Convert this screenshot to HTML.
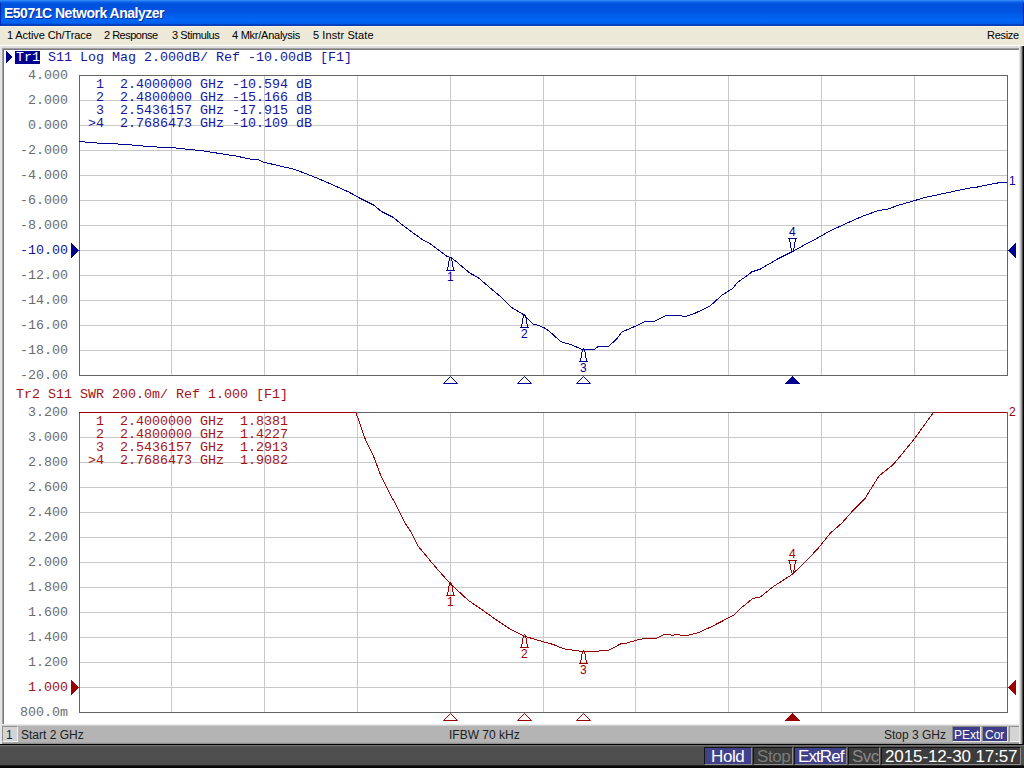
<!DOCTYPE html>
<html><head><meta charset="utf-8"><style>
html,body{margin:0;padding:0;width:1024px;height:768px;overflow:hidden;background:#fff}
.m{position:absolute;font-family:"Liberation Mono",monospace;font-size:13.333px;line-height:13px;white-space:pre}
.lab{left:0;width:68px;text-align:right}
.mn{position:absolute;font-family:"Liberation Sans",sans-serif;font-size:12px;line-height:12px;white-space:pre}
.s{position:absolute;font-family:"Liberation Sans",sans-serif;white-space:pre}
#title{position:absolute;left:0;top:0;width:1024px;height:26px;background:linear-gradient(to bottom,#3d8ef5 0px,#0a63ea 2px,#0051dc 4px,#0053e0 11px,#005fec 16px,#0066f5 20px,#0062f0 23px,#0050d8 24px,#0038b4 25px,#0038b4 26px)}
#menu{position:absolute;left:0;top:26px;width:1024px;height:19px;background:#ece9d8;border-top:1px solid #fbf6e4;box-sizing:border-box}
#frame{position:absolute;left:0;top:45px;width:1024px;height:679px;background:#fff}
#chbar{position:absolute;left:0;top:724px;width:1024px;height:20px;background:#b4b4b4}
.bx{position:absolute;top:3px;height:18px;box-sizing:border-box;border-top:1px solid #141414;border-left:1px solid #141414;border-bottom:1px solid #8c8c8c;border-right:1px solid #8c8c8c}
#insbar{position:absolute;left:0;top:744px;width:1024px;height:24px;background:#4e4e4e}
</style></head><body>
<div id="title"></div>
<div class="s" style="left:4px;top:4px;font-size:14px;font-weight:bold;color:#fff;line-height:18px;letter-spacing:-0.5px;text-shadow:1px 1px 0 #0a2a9a">E5071C Network Analyzer</div>
<div style="position:absolute;left:0;top:3px;width:1px;height:23px;background:#0029b8"></div>
<div style="position:absolute;left:1023px;top:3px;width:1px;height:23px;background:#001a90"></div>
<div id="menu"></div>
<div class="s" style="left:7px;top:28px;font-size:11px;line-height:14px;color:#000;letter-spacing:-0.1px">1 Active Ch/Trace</div>
<div class="s" style="left:104px;top:28px;font-size:11px;line-height:14px;color:#000;letter-spacing:-0.5px">2 Response</div>
<div class="s" style="left:172px;top:28px;font-size:11px;line-height:14px;color:#000;letter-spacing:-0.4px">3 Stimulus</div>
<div class="s" style="left:232px;top:28px;font-size:11px;line-height:14px;color:#000;letter-spacing:-0.25px">4 Mkr/Analysis</div>
<div class="s" style="left:313px;top:28px;font-size:11px;line-height:14px;color:#000;letter-spacing:0.1px">5 Instr State</div>
<div class="s" style="left:987px;top:28px;font-size:11px;line-height:14px;color:#000;letter-spacing:-0.3px">Resize</div>
<div id="frame">
 <div style="position:absolute;left:0;top:0;width:1024px;height:1px;background:#fff"></div>
 <div style="position:absolute;left:0;top:1px;width:1019px;height:2px;background:#dcdcdc"></div>
 <div style="position:absolute;left:2px;top:3px;width:1017px;height:1px;background:#a0a0a0"></div>
 <div style="position:absolute;left:3px;top:4px;width:1016px;height:1px;background:#7c7c7c"></div>
 <div style="position:absolute;left:0;top:1px;width:2px;height:678px;background:#e4e4e4"></div>
 <div style="position:absolute;left:2px;top:3px;width:1px;height:676px;background:#a0a0a0"></div>
 <div style="position:absolute;left:3px;top:4px;width:1px;height:675px;background:#7c7c7c"></div>
</div>
<svg width="1024" height="768" style="position:absolute;left:0;top:0"><g stroke="#c8c8c8" stroke-width="1" shape-rendering="crispEdges"><line x1="80" y1="100.5" x2="1007" y2="100.5"/><line x1="80" y1="125.5" x2="1007" y2="125.5"/><line x1="80" y1="150.5" x2="1007" y2="150.5"/><line x1="80" y1="175.5" x2="1007" y2="175.5"/><line x1="80" y1="200.5" x2="1007" y2="200.5"/><line x1="80" y1="225.5" x2="1007" y2="225.5"/><line x1="80" y1="250.5" x2="1007" y2="250.5"/><line x1="80" y1="275.5" x2="1007" y2="275.5"/><line x1="80" y1="300.5" x2="1007" y2="300.5"/><line x1="80" y1="325.5" x2="1007" y2="325.5"/><line x1="80" y1="350.5" x2="1007" y2="350.5"/><line x1="171.5" y1="76" x2="171.5" y2="375"/><line x1="264.5" y1="76" x2="264.5" y2="375"/><line x1="357.5" y1="76" x2="357.5" y2="375"/><line x1="450.5" y1="76" x2="450.5" y2="375"/><line x1="543.5" y1="76" x2="543.5" y2="375"/><line x1="635.5" y1="76" x2="635.5" y2="375"/><line x1="728.5" y1="76" x2="728.5" y2="375"/><line x1="821.5" y1="76" x2="821.5" y2="375"/><line x1="914.5" y1="76" x2="914.5" y2="375"/></g><rect x="79.5" y="75.5" width="928" height="300" fill="none" stroke="#646464" stroke-width="1" shape-rendering="crispEdges"/><polyline points="79.5,141.4 91.8,142.8 113.8,143.7 133.1,145.1 146.3,146.3 160.4,147.2 171.8,147.6 185,149 202.6,150.7 221.9,153.9 236,156 250,159.1 257,159.3 264.1,162.3 278.1,165.5 294,169.3 306.2,173.7 320.3,179.5 332.6,184.8 348.4,191.8 357.2,196.6 360,198.3 373.6,205 381.5,211.5 393,217.2 404.4,226.5 423,240.1 430.2,243.7 447.4,256.6 450.3,257.3 454.6,260.2 470.3,273.4 477.5,277.1 499.5,295.8 510.9,307.1 524.6,315.3 532.8,323.9 539.6,325.8 545.1,328.3 552,333.5 560.2,341.3 562.9,342.6 568.4,343.6 583.4,349.9 594.3,349.5 598.4,346.3 605.3,346.3 608,347.1 617.6,337.9 621.7,332.1 625.8,330.3 640,324.2 644.9,321.6 655,321 665.2,316 679.2,315.7 685.5,316.5 694.4,313.5 709.7,306.3 722.4,294.9 732.5,288.6 737.6,282.2 745.2,277.1 751.6,272 760.5,269 778.2,258.6 792.2,251.7 803.6,245.4 812.9,240.6 827.9,232 843,224.9 862.3,216.3 878.4,210.5 888.1,209 896.7,205.8 913.9,200.8 924.6,197.6 939.6,194.4 967.6,188.4 978.3,186.9 995.5,183.2 1007.3,182.1" fill="none" stroke="#000090" stroke-width="1" stroke-linejoin="round" shape-rendering="crispEdges"/><path d="M450.5,257.5 L449.5,258.5 L447.5,269.5 L446.5,270.5 L454.5,270.5 L453.5,269.5 L451.5,258.5 Z" fill="none" stroke="#000090" stroke-width="1" shape-rendering="crispEdges"/><path d="M524.5,314.5 L523.5,315.5 L521.5,326.5 L520.5,327.5 L528.5,327.5 L527.5,326.5 L525.5,315.5 Z" fill="none" stroke="#000090" stroke-width="1" shape-rendering="crispEdges"/><path d="M583.5,348.5 L582.5,349.5 L580.5,360.5 L579.5,361.5 L587.5,361.5 L586.5,360.5 L584.5,349.5 Z" fill="none" stroke="#000090" stroke-width="1" shape-rendering="crispEdges"/><path d="M792.5,251.5 L791.5,250.5 L789.5,239.5 L788.5,238.5 L796.5,238.5 L795.5,239.5 L793.5,250.5 Z" fill="none" stroke="#000090" stroke-width="1" shape-rendering="crispEdges"/><path d="M450.5,376.5 L443.5,383.5 L457.5,383.5 Z" fill="none" stroke="#000090" stroke-width="1"/><path d="M524.5,376.5 L517.5,383.5 L531.5,383.5 Z" fill="none" stroke="#000090" stroke-width="1"/><path d="M583.5,376.5 L576.5,383.5 L590.5,383.5 Z" fill="none" stroke="#000090" stroke-width="1"/><path d="M792.5,376 L784.5,384 L800.5,384 Z" fill="#000090" shape-rendering="crispEdges"/><path d="M71,242.5 L79,250.5 L71,258.5 Z" fill="#000090" shape-rendering="crispEdges"/><path d="M1016,242.5 L1008,250.5 L1016,258.5 Z" fill="#000090" shape-rendering="crispEdges"/><g stroke="#c8c8c8" stroke-width="1" shape-rendering="crispEdges"><line x1="80" y1="437.5" x2="1007" y2="437.5"/><line x1="80" y1="462.5" x2="1007" y2="462.5"/><line x1="80" y1="487.5" x2="1007" y2="487.5"/><line x1="80" y1="512.5" x2="1007" y2="512.5"/><line x1="80" y1="537.5" x2="1007" y2="537.5"/><line x1="80" y1="562.5" x2="1007" y2="562.5"/><line x1="80" y1="587.5" x2="1007" y2="587.5"/><line x1="80" y1="612.5" x2="1007" y2="612.5"/><line x1="80" y1="637.5" x2="1007" y2="637.5"/><line x1="80" y1="662.5" x2="1007" y2="662.5"/><line x1="80" y1="687.5" x2="1007" y2="687.5"/><line x1="171.5" y1="413" x2="171.5" y2="712"/><line x1="264.5" y1="413" x2="264.5" y2="712"/><line x1="357.5" y1="413" x2="357.5" y2="712"/><line x1="450.5" y1="413" x2="450.5" y2="712"/><line x1="543.5" y1="413" x2="543.5" y2="712"/><line x1="635.5" y1="413" x2="635.5" y2="712"/><line x1="728.5" y1="413" x2="728.5" y2="712"/><line x1="821.5" y1="413" x2="821.5" y2="712"/><line x1="914.5" y1="413" x2="914.5" y2="712"/></g><rect x="79.5" y="412.5" width="928" height="300" fill="none" stroke="#646464" stroke-width="1" shape-rendering="crispEdges"/><polyline points="79,412.5 355.9,412.5 359.1,421.4 364.6,437.8 372.8,454.2 381,476.1 389.2,492.5 397.4,507.6 405.6,524 411.1,532.2 418,545.9 430.3,560.9 438.5,570.5 450.8,584.2 468.6,600.6 480,608.3 495.2,619.2 510.5,629.4 524.4,636.2 538.4,640.3 553.6,644.6 563.8,648.9 582.8,651.5 595.6,651.3 608.9,650.2 620.6,643.9 626.9,643.1 639.4,639.2 656.6,638.1 662.8,635 669.1,634.5 672.2,635.3 677.7,634.5 681.6,635.3 687.8,635.3 698.8,632.5 711.3,626.7 720.6,622 733.9,615 741.5,607.7 752.9,598.3 760.1,597.1 773,586.8 791.6,574.8 804.5,562.8 818.8,547.6 830.3,533.2 841.7,523.2 853.2,510.3 864.7,498.9 879,475.9 893.3,464.5 913.4,440.1 924.8,424.4 933.4,412.5 1007,412.5" fill="none" stroke="#9a0000" stroke-width="1" stroke-linejoin="round" shape-rendering="crispEdges"/><path d="M450.5,582.5 L449.5,583.5 L447.5,594.5 L446.5,595.5 L454.5,595.5 L453.5,594.5 L451.5,583.5 Z" fill="none" stroke="#9a0000" stroke-width="1" shape-rendering="crispEdges"/><path d="M524.5,634.5 L523.5,635.5 L521.5,646.5 L520.5,647.5 L528.5,647.5 L527.5,646.5 L525.5,635.5 Z" fill="none" stroke="#9a0000" stroke-width="1" shape-rendering="crispEdges"/><path d="M583.5,650.5 L582.5,651.5 L580.5,662.5 L579.5,663.5 L587.5,663.5 L586.5,662.5 L584.5,651.5 Z" fill="none" stroke="#9a0000" stroke-width="1" shape-rendering="crispEdges"/><path d="M792.5,573.5 L791.5,572.5 L789.5,561.5 L788.5,560.5 L796.5,560.5 L795.5,561.5 L793.5,572.5 Z" fill="none" stroke="#9a0000" stroke-width="1" shape-rendering="crispEdges"/><path d="M450.5,713.5 L443.5,720.5 L457.5,720.5 Z" fill="none" stroke="#9a0000" stroke-width="1"/><path d="M524.5,713.5 L517.5,720.5 L531.5,720.5 Z" fill="none" stroke="#9a0000" stroke-width="1"/><path d="M583.5,713.5 L576.5,720.5 L590.5,720.5 Z" fill="none" stroke="#9a0000" stroke-width="1"/><path d="M792.5,713 L784.5,721 L800.5,721 Z" fill="#9a0000" shape-rendering="crispEdges"/><path d="M71,679.5 L79,687.5 L71,695.5 Z" fill="#9a0000" shape-rendering="crispEdges"/><path d="M1016,679.5 L1008,687.5 L1016,695.5 Z" fill="#9a0000" shape-rendering="crispEdges"/></svg><div style="position:absolute;left:15px;top:51px;width:25px;height:13px;background:#000090"></div><svg width="8" height="16" style="position:absolute;left:5px;top:50px"><path d="M1,0.5 L7,7 L1,13.5 Z" fill="#000090" shape-rendering="crispEdges"/></svg><div class="m" style="left:16px;top:51px;color:#1616a0;"><span style="color:#fff">Tr1</span> S11 Log Mag 2.000dB/ Ref -10.00dB [F1]</div><div class="m" style="left:16px;top:388px;color:#a41414;">Tr2 S11 SWR 200.0m/ Ref 1.000 [F1]</div><div class="m lab" style="top:69px;color:#6c6c6c">4.000</div><div class="m lab" style="top:94px;color:#6c6c6c">2.000</div><div class="m lab" style="top:119px;color:#6c6c6c">0.000</div><div class="m lab" style="top:144px;color:#6c6c6c">-2.000</div><div class="m lab" style="top:169px;color:#6c6c6c">-4.000</div><div class="m lab" style="top:194px;color:#6c6c6c">-6.000</div><div class="m lab" style="top:219px;color:#6c6c6c">-8.000</div><div class="m lab" style="top:244px;color:#1616a0">-10.00</div><div class="m lab" style="top:269px;color:#6c6c6c">-12.00</div><div class="m lab" style="top:294px;color:#6c6c6c">-14.00</div><div class="m lab" style="top:319px;color:#6c6c6c">-16.00</div><div class="m lab" style="top:344px;color:#6c6c6c">-18.00</div><div class="m lab" style="top:369px;color:#6c6c6c">-20.00</div><div class="m lab" style="top:406px;color:#6c6c6c">3.200</div><div class="m lab" style="top:431px;color:#6c6c6c">3.000</div><div class="m lab" style="top:456px;color:#6c6c6c">2.800</div><div class="m lab" style="top:481px;color:#6c6c6c">2.600</div><div class="m lab" style="top:506px;color:#6c6c6c">2.400</div><div class="m lab" style="top:531px;color:#6c6c6c">2.200</div><div class="m lab" style="top:556px;color:#6c6c6c">2.000</div><div class="m lab" style="top:581px;color:#6c6c6c">1.800</div><div class="m lab" style="top:606px;color:#6c6c6c">1.600</div><div class="m lab" style="top:631px;color:#6c6c6c">1.400</div><div class="m lab" style="top:656px;color:#6c6c6c">1.200</div><div class="m lab" style="top:681px;color:#a41414">1.000</div><div class="m lab" style="top:706px;color:#6c6c6c">800.0m</div><div class="m" style="left:88px;top:78px;color:#1616a0;"> 1  2.4000000 GHz -10.594 dB</div><div class="m" style="left:88px;top:91px;color:#1616a0;"> 2  2.4800000 GHz -15.166 dB</div><div class="m" style="left:88px;top:104px;color:#1616a0;"> 3  2.5436157 GHz -17.915 dB</div><div class="m" style="left:88px;top:117px;color:#1616a0;">&gt;4  2.7686473 GHz -10.109 dB</div><div class="m" style="left:88px;top:415px;color:#a41414;"> 1  2.4000000 GHz  1.8381</div><div class="m" style="left:88px;top:428px;color:#a41414;"> 2  2.4800000 GHz  1.4227</div><div class="m" style="left:88px;top:441px;color:#a41414;"> 3  2.5436157 GHz  1.2913</div><div class="m" style="left:88px;top:454px;color:#a41414;">&gt;4  2.7686473 GHz  1.9082</div><div class="mn" style="left:447px;top:271px;color:#000090">1</div><div class="mn" style="left:521px;top:328px;color:#000090">2</div><div class="mn" style="left:580px;top:362px;color:#000090">3</div><div class="mn" style="left:789px;top:226px;color:#000090">4</div><div class="mn" style="left:447px;top:596px;color:#9a0000">1</div><div class="mn" style="left:521px;top:648px;color:#9a0000">2</div><div class="mn" style="left:580px;top:664px;color:#9a0000">3</div><div class="mn" style="left:789px;top:548px;color:#9a0000">4</div><div class="mn" style="left:1009px;top:175px;color:#000090">1</div><div class="mn" style="left:1009px;top:406px;color:#9a0000">2</div>
<div id="chbar">
 <div style="position:absolute;left:0;top:0;width:1024px;height:1px;background:#ececec"></div>
 <div style="position:absolute;left:0;top:1px;width:1024px;height:1px;background:#d0d0d0"></div>
 <div style="position:absolute;left:0;top:18px;width:1024px;height:1px;background:#a8a8a8"></div>
 <div style="position:absolute;left:0;top:19px;width:1024px;height:1px;background:#909090"></div>
 <div style="position:absolute;left:2px;top:2px;width:14px;height:14px;background:#d4d4d4;border-top:1px solid #909090;border-left:1px solid #909090;border-bottom:1px solid #f0f0f0;border-right:1px solid #f0f0f0"></div>
 <div style="position:absolute;left:1009px;top:2px;width:9px;height:14px;background:#d4d4d4;border-top:1px solid #909090;border-left:1px solid #909090;border-bottom:1px solid #f0f0f0;border-right:1px solid #f0f0f0"></div>
 <div style="position:absolute;left:952px;top:2px;width:29px;height:16px;background:#3e3e88;border-top:1px solid #8a8a8a;border-left:1px solid #8a8a8a;border-bottom:1px solid #e4e4e4;border-right:1px solid #e4e4e4;box-sizing:border-box"></div>
 <div style="position:absolute;left:982px;top:2px;width:26px;height:16px;background:#3e3e88;border-top:1px solid #8a8a8a;border-left:1px solid #8a8a8a;border-bottom:1px solid #e4e4e4;border-right:1px solid #e4e4e4;box-sizing:border-box"></div>
</div>
<div style="position:absolute;left:1019px;top:46px;width:1px;height:698px;background:#e6e6e6"></div>
<div style="position:absolute;left:1020px;top:46px;width:1px;height:698px;background:#c4c4c4"></div>
<div style="position:absolute;left:1021px;top:46px;width:1px;height:698px;background:#969696"></div>
<div style="position:absolute;left:1022px;top:46px;width:1px;height:698px;background:#4a4a4a"></div>
<div style="position:absolute;left:1023px;top:46px;width:1px;height:698px;background:#000"></div>
<div style="position:absolute;left:0;top:724px;width:2px;height:20px;background:#e4e4e4"></div>
<div style="position:absolute;left:0;top:745px;width:2px;height:20px;background:#6a6a6a"></div>
<div class="s" style="left:6px;top:727px;font-size:12px;line-height:16px;color:#202040">1</div>
<div class="s" style="left:21px;top:727px;font-size:12px;line-height:16px;color:#202020">Start 2 GHz</div>
<div class="s" style="left:449px;top:727px;font-size:12px;line-height:16px;color:#202020">IFBW 70 kHz</div>
<div class="s" style="left:884px;top:727px;font-size:12px;line-height:16px;color:#202020">Stop 3 GHz</div>
<div class="s" style="left:954px;top:727px;font-size:12px;line-height:16px;color:#fff">PExt</div>
<div class="s" style="left:985px;top:727px;font-size:12px;line-height:16px;color:#fff">Cor</div>
<div id="insbar">
 <div style="position:absolute;left:0;top:0;width:1024px;height:1px;background:#000"></div>
 <div style="position:absolute;left:0;top:1px;width:1024px;height:1px;background:#6e6e6e"></div>
 <div style="position:absolute;left:0;top:2px;width:1024px;height:1px;background:#5a5a5a"></div>
 <div style="position:absolute;left:0;top:21px;width:1024px;height:1px;background:#222"></div>
 <div style="position:absolute;left:0;top:22px;width:1024px;height:2px;background:#080808"></div>
 <div class="bx" style="left:704px;width:48px;background:#41418a"></div>
 <div class="bx" style="left:753px;width:40px;background:#3c3c3c"></div>
 <div class="bx" style="left:794px;width:53px;background:#41418a"></div>
 <div class="bx" style="left:848px;width:32px;background:#3c3c3c"></div>
 <div class="bx" style="left:881px;width:140px;background:#3c3c3c"></div>
</div>
<div class="s" style="left:711px;top:747px;font-size:17px;line-height:20px;color:#fff;letter-spacing:-0.4px">Hold</div>
<div class="s" style="left:757px;top:747px;font-size:17px;line-height:20px;color:#7a7a7a;letter-spacing:-0.4px">Stop</div>
<div class="s" style="left:798px;top:747px;font-size:17px;line-height:20px;color:#fff;letter-spacing:-0.9px">ExtRef</div>
<div class="s" style="left:852px;top:747px;font-size:17px;line-height:20px;color:#8a8a8a;letter-spacing:-0.5px">Svc</div>
<div class="s" style="left:885px;top:747px;font-size:17px;line-height:20px;color:#fff;letter-spacing:-0.11px">2015-12-30 17:57</div>
</body></html>
